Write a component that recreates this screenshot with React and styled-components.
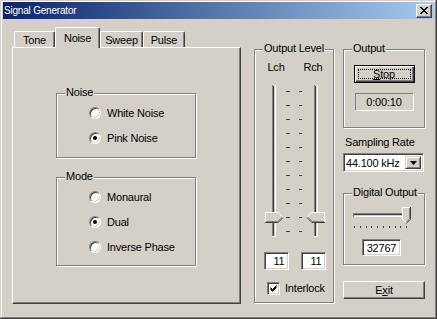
import React from "react";
import styled, { createGlobalStyle } from "styled-components";

const Global = createGlobalStyle`
  html, body { margin: 0; padding: 0; background: #d4d0c8; }
  body { font-family: "Liberation Sans", Arial, sans-serif; font-size: 11px; color: #000; }
  * { box-sizing: border-box; }
`;

const Window = styled.div`
  width: 437px;
  height: 319px;
  background: #d4d0c8;
  padding: 2px 3px 3px 3px;
  box-shadow: inset -1px -1px #404040, inset 1px 1px #d4d0c8, inset -2px -2px #808080, inset 2px 2px #fff;
  display: flex;
  flex-direction: column;
  letter-spacing: -0.2px;
`;

const TitleBar = styled.div`
  height: 17px;
  flex: none;
  display: flex;
  align-items: center;
  justify-content: space-between;
  padding: 0 2px 0 1px;
  background: linear-gradient(to right, #0a246a, #a6caf0);
`;

const TitleText = styled.span`
  color: #fff;
  font-size: 10px;
  line-height: 17px;
`;

const CloseButton = styled.span`
  width: 16px;
  height: 14px;
  display: flex;
  align-items: center;
  justify-content: center;
  background: #d4d0c8;
  border: 1px solid;
  border-color: #fff #404040 #404040 #fff;
  box-shadow: inset -1px -1px #808080;
`;

const Content = styled.div`
  display: flex;
  align-items: flex-start;
  padding-left: 9px;
`;

const LeftCol = styled.div`
  margin-top: 8px;
  width: 229px;
  display: flex;
  flex-direction: column;
`;

const TabRow = styled.div`
  display: flex;
  align-items: flex-end;
  height: 20px;
  padding-left: 2px;
  position: relative;
  z-index: 1;
`;

const Tab = styled.div`
  width: ${(p) => p.$w}px;
  height: ${(p) => (p.$active ? 21 : 16)}px;
  margin-bottom: ${(p) => (p.$active ? -1 : 0)}px;
  background: #d4d0c8;
  border-left: 1px solid #fff;
  border-top: 1px solid #fff;
  border-right: 1px solid #404040;
  border-radius: 2px 2px 0 0;
  box-shadow: inset -1px 0 #808080;
  display: flex;
  align-items: center;
  justify-content: center;
  padding-bottom: ${(p) => (p.$active ? 1 : 0)}px;
`;

const Panel = styled.div`
  width: 229px;
  height: 257px;
  background: #d4d0c8;
  border-left: 1px solid #fff;
  border-top: 1px solid #fff;
  border-right: 1px solid #404040;
  border-bottom: 1px solid #404040;
  box-shadow: inset -1px -1px #808080;
  display: flex;
  flex-direction: column;
  gap: 19px;
  padding: 45px 0 0 43px;
`;

const Group = styled.div`
  position: relative;
  flex: none;
  width: ${(p) => p.$w}px;
  height: ${(p) => p.$h}px;
  margin-top: ${(p) => p.$mt || 0}px;
  margin-left: ${(p) => p.$ml || 0}px;
  border: 1px solid #808080;
  box-shadow: inset 1px 1px #fff, 1px 1px #fff;
  display: flex;
  flex-direction: column;
`;

const GroupTitle = styled.span`
  position: absolute;
  top: -8px;
  left: 8px;
  padding: 0 1px;
  background: #d4d0c8;
  line-height: 13px;
  white-space: nowrap;
`;

const Options = styled.div`
  display: flex;
  flex-direction: column;
  gap: 13px;
  padding: 13px 0 0 32px;
`;

const OptionRow = styled.div`
  display: flex;
  align-items: center;
  gap: 6px;
  height: 12px;
  line-height: 12px;
  white-space: nowrap;
`;

const Radio = styled.span`
  position: relative;
  flex: none;
  width: 12px;
  height: 12px;
  border-radius: 50%;
  background: #fff;
  border: 1px solid;
  border-color: #808080 #fff #fff #808080;
  box-shadow: inset 1px 1px #404040, inset -1px -1px #d4d0c8;
  &::after {
    content: "";
    display: ${(p) => (p.$on ? "block" : "none")};
    position: absolute;
    left: 3px;
    top: 3px;
    width: 4px;
    height: 4px;
    border-radius: 50%;
    background: #000;
  }
`;

const Channels = styled.div`
  display: flex;
  gap: 5px;
  padding: 11px 0 0 5px;
`;

const Channel = styled.div`
  width: 32px;
  display: flex;
  flex-direction: column;
  align-items: center;
`;

const ChannelLabel = styled.span`
  line-height: 13px;
`;

const SliderSvg = styled.svg`
  display: block;
  margin-top: ${(p) => p.$mt || 0}px;
`;

const Field = styled.div`
  width: ${(p) => p.$w}px;
  height: ${(p) => p.$h}px;
  margin-top: ${(p) => p.$mt || 0}px;
  margin-left: ${(p) => p.$ml || 0}px;
  background: #fff;
  border: 1px solid;
  border-color: #808080 #fff #fff #808080;
  box-shadow: inset 1px 1px #404040, inset -1px -1px #d4d0c8;
  display: flex;
  align-items: center;
  justify-content: ${(p) => p.$justify || "flex-end"};
  padding: 0 3px;
  line-height: 14px;
`;

const CheckRow = styled.div`
  display: flex;
  align-items: center;
  gap: 5px;
  margin-top: 12px;
  padding-left: 12px;
  line-height: 13px;
`;

const CheckBox = styled.span`
  width: 13px;
  height: 13px;
  flex: none;
  background: #fff;
  border: 1px solid;
  border-color: #808080 #fff #fff #808080;
  box-shadow: inset 1px 1px #404040, inset -1px -1px #d4d0c8;
  display: flex;
  align-items: center;
  justify-content: center;
`;

const RightCol = styled.div`
  margin: 30px 0 0 9px;
  width: 82px;
  display: flex;
  flex-direction: column;
`;

const CenterStack = styled.div`
  display: flex;
  flex-direction: column;
  align-items: center;
  gap: 10px;
  padding-top: 15px;
`;

const Button = styled.div`
  width: ${(p) => p.$w}px;
  height: 18px;
  margin-top: ${(p) => p.$mt || 0}px;
  background: #d4d0c8;
  border: 1px solid;
  border-color: ${(p) => (p.$default ? "#000" : "#fff #404040 #404040 #fff")};
  box-shadow: ${(p) =>
    p.$default
      ? "inset 1px 1px #fff, inset -1px -1px #404040, inset -2px -2px #808080"
      : "inset -1px -1px #808080"};
  display: flex;
  align-items: stretch;
  justify-content: stretch;
  padding: ${(p) => (p.$default ? "3px" : "0")};
`;

const ButtonLabel = styled.span`
  flex: 1;
  display: flex;
  align-items: center;
  justify-content: center;
  line-height: 12px;
  border: 1px dotted ${(p) => (p.$focus ? "#000" : "transparent")};
`;

const StaticBox = styled.div`
  width: 59px;
  height: 18px;
  border: 1px solid;
  border-color: #808080 #fff #fff #808080;
  display: flex;
  align-items: center;
  justify-content: center;
  line-height: 14px;
`;

const PlainLabel = styled.span`
  margin-top: 8px;
  padding-left: 2px;
  line-height: 13px;
  white-space: nowrap;
`;

const Combo = styled.div`
  margin-top: 4px;
  width: 81px;
  height: 19px;
  background: #fff;
  border: 1px solid;
  border-color: #808080 #fff #fff #808080;
  box-shadow: inset 1px 1px #404040, inset -1px -1px #d4d0c8;
  display: flex;
  align-items: stretch;
  padding: 2px;
`;

const ComboText = styled.span`
  flex: 1;
  line-height: 15px;
  padding-left: 0px;
  white-space: nowrap;
`;

const ComboButton = styled.span`
  width: 16px;
  background: #d4d0c8;
  border: 1px solid;
  border-color: #d4d0c8 #404040 #404040 #d4d0c8;
  box-shadow: inset 1px 1px #fff, inset -1px -1px #808080;
  display: flex;
  align-items: center;
  justify-content: center;
`;

const DigitalBody = styled.div`
  display: flex;
  flex-direction: column;
  align-items: flex-start;
  padding: 13px 0 0 8px;
`;

const TICKS = Array.from({ length: 11 }, (_, i) => 7 + i * 14);

function VSlider({ side }) {
  const right = side === "right";
  const trackX = right ? 12 : 17;
  const tickX = right ? 26 : 2;
  const tickW = right ? 4 : 3;
  return (
    <SliderSvg $mt={10} width="32" height="154" viewBox="0 0 32 154">
      <rect x={trackX} y="1" width="1" height="152" fill="#808080" />
      <rect x={trackX + 1} y="2" width="1" height="150" fill="#404040" />
      <rect x={trackX + 2} y="2" width="1" height="150" fill="#d4d0c8" />
      <rect x={trackX + 3} y="1" width="1" height="152" fill="#fff" />
      <rect x={trackX} y="152" width="4" height="1" fill="#fff" />
      {TICKS.map((y) => (
        <rect key={y} x={tickX} y={y} width={tickW} height="1" fill="#404040" />
      ))}
      <g transform={right ? "translate(5,128)" : "translate(28,128) scale(-1,1)"}>
        <path d="M0 0 H13 L18 5 L13 10 H0 Z" fill="#d4d0c8" />
        <path d="M0.5 10 V0.5 H13.3 L18 5.2" stroke="#fff" fill="none" />
        <path d="M18 5.5 L13.2 10.5 H0" stroke="#404040" fill="none" />
        <path d="M16.6 5.5 L12.8 9.5 H1" stroke="#808080" fill="none" />
      </g>
    </SliderSvg>
  );
}

function HSlider() {
  const ticks = Array.from({ length: 10 }, (_, i) => Math.round(2 + i * 5.8));
  return (
    <SliderSvg width="60" height="22" viewBox="0 0 60 22">
      <rect x="1" y="6" width="56" height="1" fill="#808080" />
      <rect x="2" y="7" width="54" height="1" fill="#404040" />
      <rect x="2" y="8" width="54" height="1" fill="#d4d0c8" />
      <rect x="1" y="9" width="56" height="1" fill="#fff" />
      <rect x="1" y="6" width="1" height="4" fill="#808080" />
      <rect x="56" y="6" width="1" height="4" fill="#fff" />
      {ticks.map((x) => (
        <rect key={x} x={x} y="19" width="1" height="2" fill="#404040" />
      ))}
      <g transform="translate(50,0)">
        <path d="M0 0 H8 V12 L4 16 L0 12 Z" fill="#d4d0c8" />
        <path d="M0.5 12 V0.5 H8" stroke="#fff" fill="none" />
        <path d="M8.5 0 V12.2 L4.3 16.5" stroke="#404040" fill="none" />
        <path d="M7.5 1 V11.8 L4 15.2" stroke="#808080" fill="none" />
        <path d="M0.5 12 L4 15.5" stroke="#fff" fill="none" />
      </g>
    </SliderSvg>
  );
}

export default function App() {
  return (
    <>
      <Global />
      <Window>
        <TitleBar>
          <TitleText>Signal Generator</TitleText>
          <CloseButton>
            <svg width="8" height="7" viewBox="0 0 8 7">
              <path d="M0 0 L7 7 M1 0 L8 7 M7 0 L0 7 M8 0 L1 7" stroke="#000" strokeWidth="1" />
            </svg>
          </CloseButton>
        </TitleBar>
        <Content>
          <LeftCol>
            <TabRow>
              <Tab $w={41}>Tone</Tab>
              <Tab $w={45} $active>Noise</Tab>
              <Tab $w={43}>Sweep</Tab>
              <Tab $w={42}>Pulse</Tab>
            </TabRow>
            <Panel>
              <Group $w={140} $h={65}>
                <GroupTitle>Noise</GroupTitle>
                <Options>
                  <OptionRow><Radio />White Noise</OptionRow>
                  <OptionRow><Radio $on />Pink Noise</OptionRow>
                </Options>
              </Group>
              <Group $w={140} $h={89}>
                <GroupTitle>Mode</GroupTitle>
                <Options>
                  <OptionRow><Radio />Monaural</OptionRow>
                  <OptionRow><Radio $on />Dual</OptionRow>
                  <OptionRow><Radio />Inverse Phase</OptionRow>
                </Options>
              </Group>
            </Panel>
          </LeftCol>

          <Group $w={80} $h={254} $mt={30} $ml={13}>
            <GroupTitle>Output Level</GroupTitle>
            <Channels>
              <Channel>
                <ChannelLabel>Lch</ChannelLabel>
                <VSlider side="right" />
                <Field $w={25} $h={18} $mt={14}>11</Field>
              </Channel>
              <Channel>
                <ChannelLabel>Rch</ChannelLabel>
                <VSlider side="left" />
                <Field $w={25} $h={18} $mt={14}>11</Field>
              </Channel>
            </Channels>
            <CheckRow>
              <CheckBox>
                <svg width="7" height="7" viewBox="0 0 7 7">
                  <path d="M0.5 2.5 L2.5 4.5 L6.5 0.5 M0.5 3.5 L2.5 5.5 L6.5 1.5 M0.5 4.5 L2.5 6.5 L6.5 2.5" stroke="#000" fill="none" strokeWidth="1" />
                </svg>
              </CheckBox>
              Interlock
            </CheckRow>
          </Group>

          <RightCol>
            <Group $w={82} $h={79}>
              <GroupTitle>Output</GroupTitle>
              <CenterStack>
                <Button $w={61} $default>
                  <ButtonLabel $focus><u>S</u>top</ButtonLabel>
                </Button>
                <StaticBox>0:00:10</StaticBox>
              </CenterStack>
            </Group>
            <PlainLabel>Sampling Rate</PlainLabel>
            <Combo>
              <ComboText>44.100 kHz</ComboText>
              <ComboButton>
                <svg width="7" height="4" viewBox="0 0 7 4">
                  <path d="M0 0 H7 L3.5 4 Z" fill="#000" />
                </svg>
              </ComboButton>
            </Combo>
            <Group $w={82} $h={72} $mt={21}>
              <GroupTitle>Digital Output</GroupTitle>
              <DigitalBody>
                <HSlider />
                <Field $w={39} $h={17} $mt={10} $ml={10} $justify="center">32767</Field>
              </DigitalBody>
            </Group>
            <Button $w={82} $mt={16}>
              <ButtonLabel>E<u>x</u>it</ButtonLabel>
            </Button>
          </RightCol>
        </Content>
      </Window>
    </>
  );
}
